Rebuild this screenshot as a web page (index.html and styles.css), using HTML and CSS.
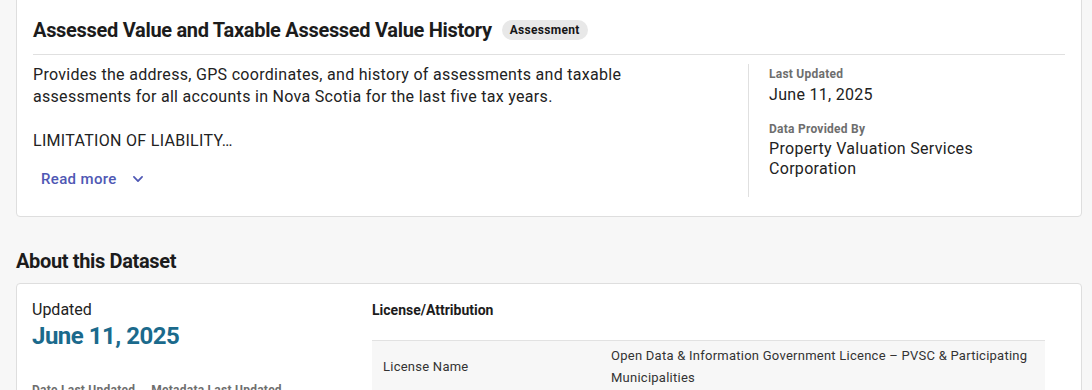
FILE: index.html
```html
<!DOCTYPE html>
<html lang="en">
<head>
<meta charset="utf-8">
<title>Assessed Value and Taxable Assessed Value History</title>
<link rel="stylesheet" href="styles.css">
</head>
<body>
<main class="page">
  <section class="card summary">
    <header class="summary-head">
      <h1 class="title">Assessed Value and Taxable Assessed Value History</h1>
      <span class="badge">Assessment</span>
    </header>
    <div class="summary-body">
      <div class="desc">
        <p class="desc-text">Provides the address, GPS coordinates, and history of assessments and taxable assessments for all accounts in Nova Scotia for the last five tax years.</p>
        <p class="desc-text">LIMITATION OF LIABILITY…</p>
        <button class="read-more" type="button">Read more
          <svg class="chev" width="14" height="14" viewBox="0 0 24 24" aria-hidden="true"><path d="M5 8.5l7 7 7-7" fill="none" stroke="currentColor" stroke-width="3" stroke-linecap="round" stroke-linejoin="round"/></svg>
        </button>
      </div>
      <aside class="meta">
        <div class="meta-label">Last Updated</div>
        <div class="meta-value">June 11, 2025</div>
        <div class="meta-label meta-gap">Data Provided By</div>
        <div class="meta-value tight">Property Valuation Services Corporation</div>
      </aside>
    </div>
  </section>

  <h2 class="section-title">About this Dataset</h2>

  <section class="card about">
    <div class="about-left">
      <div class="upd-label">Updated</div>
      <div class="upd-date">June 11, 2025</div>
      <div class="upd-sub">
        <span class="sub-label">Date Last Updated</span>
        <span class="sub-label">Metadata Last Updated</span>
      </div>
    </div>
    <div class="about-right">
      <h3 class="lic-title">License/Attribution</h3>
      <div class="lic-table">
        <div class="lic-row">
          <div class="lic-key">License Name</div>
          <div class="lic-val">Open Data &amp; Information Government Licence – PVSC &amp; Participating Municipalities</div>
        </div>
      </div>
    </div>
  </section>
</main>
</body>
</html>
```

FILE: styles.css
```css
* { box-sizing: border-box; }

html, body {
  margin: 0;
  padding: 0;
  background: #f7f7f7;
  font-family: Roboto, "Liberation Sans", Arial, sans-serif;
  color: #212121;
}

.page {
  padding: 0 10px 0 16px;
}

.card {
  background: #fff;
  border: 1px solid #dedede;
  border-radius: 4px;
}

.summary {
  margin-top: -1px;
  border-top-left-radius: 0;
  border-top-right-radius: 0;
  padding: 16px 16px 13px 16px;
}

.summary-head {
  display: flex;
  align-items: center;
  gap: 10px;
  padding-bottom: 10px;
  border-bottom: 1px solid #e0e0e0;
}

.title {
  margin: 0;
  font-size: 20px;
  line-height: 28px;
  font-weight: 700;
  color: #1c1c1c;
  letter-spacing: -0.3px;
}

.badge {
  display: inline-block;
  background: #e8e8e8;
  border-radius: 10px;
  padding: 0 8px;
  height: 20px;
  line-height: 20px;
  font-size: 12px;
  font-weight: 700;
  letter-spacing: 0.3px;
  color: #151515;
}

.summary-body {
  display: flex;
  padding: 9px 0 6px;
}

.desc {
  flex: 0 0 716px;
  padding-right: 60px;
  border-right: 1px solid #e0e0e0;
}

.desc-text {
  margin: 0 0 22px;
  font-size: 16px;
  line-height: 22px;
  letter-spacing: 0.3px;
  color: #222;
}

.desc-text + .desc-text {
  margin-bottom: 0;
}

.read-more {
  display: inline-flex;
  align-items: center;
  gap: 14px;
  margin-top: 9px;
  height: 36px;
  padding: 0 8px;
  border: 0;
  background: transparent;
  font-family: inherit;
  font-size: 15px;
  font-weight: 500;
  letter-spacing: 0.35px;
  color: #4f58b4;
  cursor: pointer;
}

.chev { display: block; }

.meta {
  flex: 1 1 auto;
  padding: 0 60px 0 20px;
}

.meta-label {
  font-size: 12px;
  line-height: 20px;
  font-weight: 700;
  letter-spacing: 0.25px;
  color: #6e6e6e;
}

.meta-gap { margin-top: 13px; }

.meta-value {
  font-size: 16px;
  line-height: 22px;
  letter-spacing: 0.3px;
  color: #222;
}

.meta-value.tight { line-height: 20px; }

.section-title {
  margin: 30px 0 8px;
  font-size: 20px;
  line-height: 28px;
  font-weight: 700;
  letter-spacing: -0.35px;
  color: #1c1c1c;
}

.about {
  display: grid;
  grid-template-columns: 324px 1fr;
  column-gap: 16px;
  padding: 16px 36px 0 15px;
  border-bottom-left-radius: 0;
  border-bottom-right-radius: 0;
}

.upd-label {
  font-size: 16px;
  line-height: 20px;
  color: #222;
}

.upd-date {
  font-size: 24px;
  line-height: 30px;
  font-weight: 700;
  letter-spacing: -0.5px;
  color: #1b6a8c;
  margin-top: 1px;
}

.upd-sub {
  display: flex;
  gap: 16px;
  margin-top: 31px;
}

.sub-label {
  font-size: 12px;
  line-height: 16px;
  font-weight: 700;
  letter-spacing: 0.25px;
  color: #6e6e6e;
}

.lic-title {
  margin: 0 0 20px;
  font-size: 14px;
  line-height: 20px;
  font-weight: 700;
  color: #1c1c1c;
}

.lic-table {
  background: #f7f7f7;
  border-top: 1px solid #e2e2e2;
}

.lic-row {
  display: grid;
  grid-template-columns: 239px 1fr;
  align-items: center;
  padding: 4px 0 6px;
}

.lic-key {
  padding-left: 11px;
  font-size: 13px;
  line-height: 22px;
  letter-spacing: 0.25px;
  color: #333;
}

.lic-val {
  padding-right: 12px;
  font-size: 13px;
  line-height: 22px;
  letter-spacing: 0.25px;
  color: #333;
}
```
